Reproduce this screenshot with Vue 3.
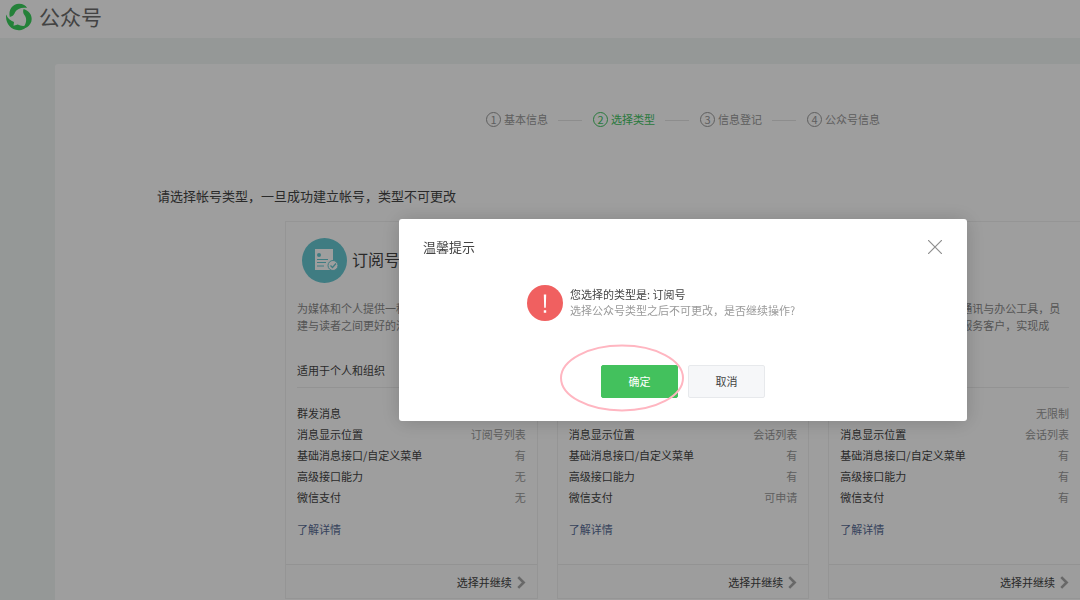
<script setup>
const steps = ['基本信息', '选择类型', '信息登记', '公众号信息']
const activeStep = 1

const features = ['群发消息', '消息显示位置', '基础消息接口/自定义菜单', '高级接口能力', '微信支付']

const accounts = [
  {
    name: '订阅号',
    lines: ['为媒体和个人提供一种新的信息传播方式，构', '建与读者之间更好的沟通与管理模式'],
    target: '适用于个人和组织',
    values: ['1条/天', '订阅号列表', '有', '无', '无'],
  },
  {
    name: '服务号',
    lines: ['给企业和组织提供更强大的业务服务与用户', '管理能力，帮助企业快速实现服务平台'],
    target: '不适用于个人',
    values: ['4条/月', '会话列表', '有', '有', '可申请'],
  },
  {
    name: '企业微信',
    lines: ['为企业和组织提供专业的通讯与办公工具，员', '工可借助微信连接和更好服务客户，实现成', '功连接'],
    target: '适用于企业',
    values: ['无限制', '会话列表', '有', '有', '有'],
  },
]
</script>

<template>
  <div class="page">
    <header class="header">
      <svg class="logo" viewBox="0 0 28 28" aria-hidden="true">
        <g fill="#3ad05c">
          <path d="M4.800 14C3 6.500 8 .8 14 .8c4 0 7 2 8 4.200C16.500 4 12 6 10.200 9c-1 1.700-1.200 4.200-5.400 5z" />
          <path d="M4.800 14C3 6.500 8 .8 14 .8c4 0 7 2 8 4.200C16.500 4 12 6 10.200 9c-1 1.700-1.200 4.200-5.400 5z" transform="rotate(120 14 14)" />
          <path d="M1.300 11.500C-.2 19 5 27.200 13.500 27.200c4 0 7.500-2 8.500-5-2.500 1-6.500 1-9.200-.6l-4.300 1.100.5-3.700C5.500 17.500 2.500 15.500 1.300 11.500z" />
        </g>
      </svg>
      <span class="brand">公众号</span>
    </header>

    <main class="panel">
      <ol class="steps">
        <li v-for="(step, i) in steps" :key="step" class="step" :class="{ active: i === activeStep }">
          <span class="num">{{ i + 1 }}</span>
          <span>{{ step }}</span>
        </li>
      </ol>

      <h1 class="title">请选择帐号类型，一旦成功建立帐号，类型不可更改</h1>

      <div class="cards">
        <section v-for="a in accounts" :key="a.name" class="card">
          <div class="body">
            <div class="name">
              <svg viewBox="0 0 45 45" class="avatar" aria-hidden="true">
                <circle cx="22.500" cy="22.500" r="22.500" fill="#67c8d2" />
                <path d="M13 11h18v21H13z" fill="#fff" />
                <circle cx="17" cy="17" r="2" fill="#67c8d2" />
                <path d="M15 21.500h11M15 24.500h9M15 28h7" stroke="#67c8d2" fill="none" />
                <circle cx="31" cy="27.500" r="5" fill="#fff" stroke="#67c8d2" />
                <path d="M28.500 27.500l2 2 3.500-4" stroke="#67c8d2" fill="none" stroke-width="1.300" />
              </svg>
              <h2>{{ a.name }}</h2>
            </div>
            <p class="desc"><span v-for="l in a.lines" :key="l">{{ l }}</span></p>
            <p class="target">{{ a.target }}</p>
            <dl class="features">
              <div v-for="(f, i) in features" :key="f">
                <dt>{{ f }}</dt>
                <dd>{{ a.values[i] }}</dd>
              </div>
            </dl>
            <a href="#" class="more">了解详情</a>
          </div>
          <div class="foot">
            <a href="#" class="go">
              选择并继续
              <svg viewBox="0 0 8 12" aria-hidden="true"><path d="M1 1l5 5-5 5" fill="none" stroke="#a8a8a8" stroke-width="2.400" /></svg>
            </a>
          </div>
        </section>
      </div>
    </main>

    <div class="mask">
      <div class="dialog" role="dialog" aria-labelledby="dialog-title">
        <div class="dialog-head">
          <h3 id="dialog-title">温馨提示</h3>
          <button class="close" type="button" aria-label="关闭">
            <svg viewBox="0 0 14 14" aria-hidden="true"><path d="M0 0l14 14M14 0L0 14" stroke="#8f8f8f" stroke-width="1.200" /></svg>
          </button>
        </div>
        <div class="message">
          <svg class="warn" viewBox="0 0 36 36" aria-hidden="true">
            <circle cx="18" cy="18" r="18" fill="#f06060" />
            <path d="M16.800 9.500h2.400l-.4 13.200h-1.600zM16.800 25.300h2.400v2.500h-2.400z" fill="#fff" />
          </svg>
          <div>
            <p class="main-text">您选择的类型是: 订阅号</p>
            <p class="sub-text">选择公众号类型之后不可更改，是否继续操作?</p>
          </div>
        </div>
        <div class="actions">
          <button type="button" class="btn primary">
            确定
            <svg class="ring" viewBox="0 0 124 68" aria-hidden="true"><ellipse cx="62" cy="34" rx="61" ry="32.500" fill="none" stroke="#ffb6c1" stroke-width="2" /></svg>
          </button>
          <button type="button" class="btn">取消</button>
        </div>
      </div>
    </div>
  </div>
</template>

<style>
body {
  overflow: hidden;
}
</style>

<style scoped>
.page {
  min-height: 100vh;
  overflow: hidden;
  display: flex;
  flex-direction: column;
  background: #f1f5f4;
  color: #444;
  font: 11px/18px "Noto Sans CJK SC", "Liberation Sans", sans-serif;
}
h1, h2, h3, p, dl, dd, ol {
  margin: 0;
  padding: 0;
  font-weight: 400;
}
a {
  text-decoration: none;
}
button {
  font: inherit;
  cursor: pointer;
}
.header {
  display: flex;
  align-items: center;
  gap: 6px;
  height: 34px;
  padding: 0 5px 4px;
  background: #fff;
}
.logo {
  width: 28px;
  height: 28px;
}
.brand {
  padding-bottom: 3px;
  font-size: 21px;
  line-height: 28px;
  color: #6c6c6c;
}
.panel {
  flex: 1;
  margin: 26px 0 0 55px;
  padding-top: 46px;
  background: #fff;
  border-radius: 3px 0 0;
}
.steps {
  display: flex;
  padding-left: 431px;
  list-style: none;
  color: #9a9a9a;
}
.step {
  display: flex;
  align-items: center;
  gap: 3px;
  white-space: nowrap;
}
.step:not(:last-child)::after {
  content: "";
  width: 24px;
  margin: 3px 11px 0 7px;
  border-top: 1px solid #e4e4e4;
}
.num {
  box-sizing: border-box;
  width: 15px;
  height: 15px;
  border: 1px solid #9a9a9a;
  border-radius: 50%;
  text-align: center;
  line-height: 13px;
}
.step.active {
  color: #43c463;
}
.step.active .num {
  border-color: #43c463;
}
.title {
  margin: 58px 0 15px 102px;
  font-size: 13px;
  line-height: 20px;
}
.cards {
  display: grid;
  grid-template-columns: repeat(3, minmax(0, 1fr));
  gap: 19px;
  margin: 0 -1px 0 230px;
}
.card {
  border: 1px solid #f0f0f0;
}
.body {
  padding: 16px 11px 26px;
}
.name {
  display: flex;
  align-items: center;
  gap: 5px;
  padding-left: 5px;
}
.avatar {
  width: 45px;
  height: 45px;
}
.name h2 {
  padding-bottom: 4px;
  font-size: 16px;
  line-height: 24px;
}
.desc {
  height: 53px;
  margin-top: 17px;
  line-height: 17px;
  color: #8a8a8a;
}
.desc span {
  display: block;
  white-space: nowrap;
}
.target {
  margin-bottom: 15px;
  padding: 8px 0;
  border-bottom: 1px solid #ededed;
}
.features div {
  display: flex;
  justify-content: space-between;
  line-height: 21px;
}
.features dd {
  color: #9a9a9a;
}
.more {
  display: block;
  margin-top: 12px;
  color: #576b95;
}
.foot {
  display: flex;
  justify-content: flex-end;
  padding: 8px 11px 7px;
  border-top: 1px solid #ededed;
  background: #fdfdfd;
}
.go {
  display: flex;
  align-items: center;
  gap: 5px;
  color: #444;
}
.go svg {
  width: 9px;
  height: 13px;
}
.mask {
  position: fixed;
  inset: 0;
  padding: 219px 113px 0 399px;
  background: rgba(0, 0, 0, 0.38);
}
.dialog {
  background: #fff;
  border-radius: 3px;
  box-shadow: 0 1px 20px rgba(0, 0, 0, 0.18);
}
.dialog-head {
  display: flex;
  align-items: center;
  justify-content: space-between;
  padding: 18px 25px 0 24px;
}
.dialog-head h3 {
  font-size: 13px;
  line-height: 20px;
}
.close {
  display: flex;
  padding: 0;
  border: 0;
  background: none;
}
.close svg {
  width: 14px;
  height: 14px;
}
.message {
  display: flex;
  gap: 7px;
  padding: 28px 0 0 128px;
  line-height: 16px;
}
.warn {
  width: 36px;
  height: 36px;
}
.sub-text {
  color: #9a9a9a;
}
.main-text {
  padding-top: 1px;
}
.actions {
  display: flex;
  gap: 10px;
  padding: 44px 0 23px 202px;
}
.btn {
  position: relative;
  width: 77px;
  height: 33px;
  padding: 0 0 2px;
  border: 1px solid #e7e9ec;
  border-radius: 2px;
  background: #f6f7f9;
  color: #444;
}
.btn.primary {
  border-color: #43c15d;
  background: #43c15d;
  color: #fff;
}
.ring {
  position: absolute;
  left: -42px;
  top: -22px;
  width: 124px;
  height: 68px;
  pointer-events: none;
}
</style>
